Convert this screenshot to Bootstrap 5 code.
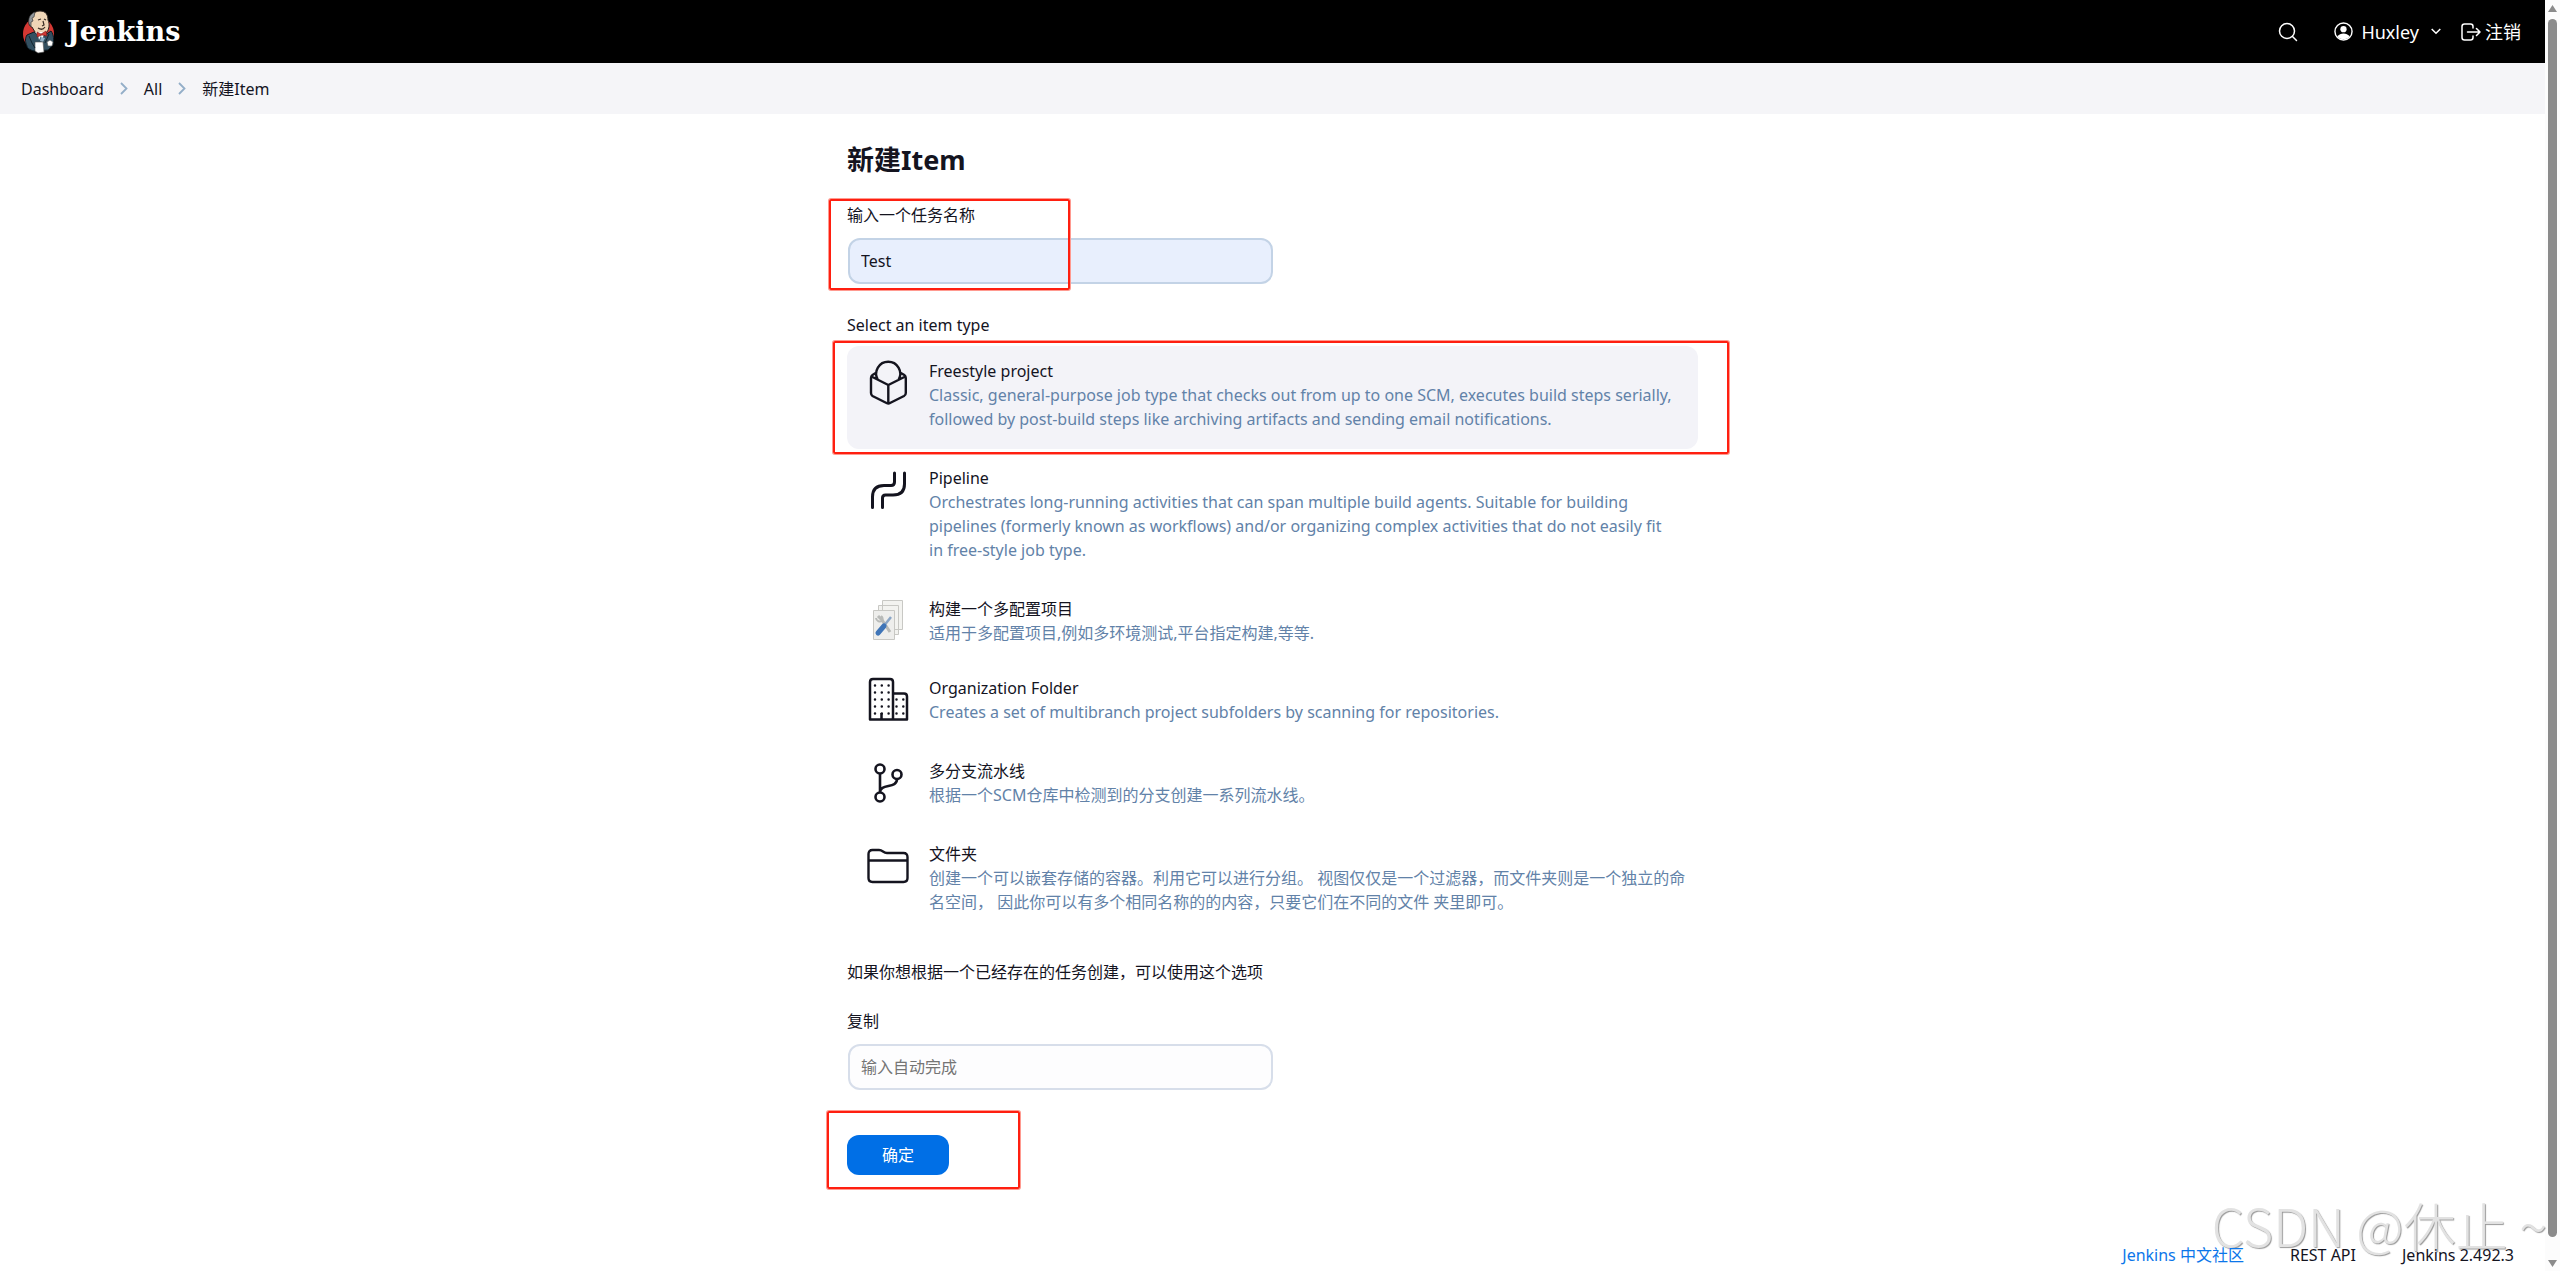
<!DOCTYPE html>
<html lang="zh-CN">
<head>
<meta charset="utf-8">
<meta name="viewport" content="width=device-width, initial-scale=1">
<title>新建Item - Jenkins</title>
<link href="https://cdn.jsdelivr.net/npm/bootstrap@5.3.0/dist/css/bootstrap.min.css" rel="stylesheet">
<style>
body{font-family:"Noto Sans","Noto Sans CJK SC",sans-serif;font-size:16px;line-height:24px;color:#14141f;background:#fff}
a{color:inherit;text-decoration:none}
.top-bar{background:#000;color:#fff;height:63px;padding:0 24px 0 21px;font-size:18px}
.brand-link{gap:10px}
.brand-name{font:bold 27px/32px "DejaVu Serif",serif}
.top-tools{gap:20px}
.crumbs{background:#f5f5f8;height:51px;padding:0 21px;gap:16px}
.form-col{width:100%;max-width:851px}
.page-title{font-size:27px;line-height:36px;font-weight:700;margin:0}
.field-label{display:block;line-height:26px}
.field{width:425px;max-width:100%;height:46px;border:2px solid #c3d3e6;border-radius:12px;padding:0 11px;font-size:16px;background:#e8effd;color:#14141f;margin:10px 0 0 1px}
.field-copy{background:#fdfdfe;border-color:#d7deea}
.field::placeholder{color:#757575}
.kind{border-radius:12px;padding:13px 8px 18px 20px;gap:20px;cursor:pointer}
.kind-on{background:#f3f3f8}
.kind svg{width:42px;height:48px;flex:none}
.kind-desc{color:#6282a8}
.actions{margin-top:45px}
.ok-btn{background:#006fe6;color:#fff;border:0;border-radius:12px;width:102px;height:40px;font-size:16px}
.frame{position:absolute;border:2px solid #ff1f10;border-radius:2px;box-shadow:0 0 0 1px #ff9a90;pointer-events:none}
.frame-name{left:-18px;top:-3px;width:241px;height:91px}
.frame-kind{left:-14px;top:-5px;right:-31px;bottom:-5px}
.frame-ok{left:-20px;top:-24px;width:193px;height:78px}
.foot{gap:46px;padding:0 31px 4px 0;z-index:2}
.foot a:first-child{color:#0b76ea}
.scroll-track{width:15px;background:#fcfcfc;padding:5px 0 4px;gap:6px}
.scroll-thumb{width:9px;border-radius:5px;background:#8b8b8b}
.stamp{position:absolute;right:13px;bottom:16px;z-index:1;font:300 52px/60px "Noto Sans CJK SC",sans-serif;color:#e2e2e2;text-shadow:1px 1px 1px #999;pointer-events:none;white-space:nowrap}
</style>
<script src="https://cdn.jsdelivr.net/npm/bootstrap@5.3.0/dist/js/bootstrap.bundle.min.js"></script>
</head>
<body class="d-flex min-vh-100 position-relative">
<div class="d-flex flex-column flex-grow-1">
  <header class="top-bar d-flex align-items-center justify-content-between">
    <a href="#" class="brand-link d-flex align-items-center">
      <svg width="36" height="46" viewBox="0 0 36 46">
        <ellipse cx="17.500" cy="25" rx="15.500" ry="16.500" fill="#d33833"/>
        <path d="M6 26l7-3 8 5 9-6c3 4 3 9 2 14l-5 5-14 1c-4-1-7-3-7-5-2-4-2-8 0-11z" fill="#335061" stroke="#0b1a22"/>
        <path d="M8 14c0-7 5-12 11-12 6 0 8 4 8 9 2 4 1 9-1 12-3 4-8 4-12 0l-3-5c-2 0-3-2-3-4z" fill="#f0d6b7" stroke="#2b2320"/>
        <path d="M8 15c-1-6 1-10 6-12l-1 5-2 1 1 3-2 1v4z" fill="#92979b" stroke="#3b3b3b" stroke-width=".7"/>
        <path d="M17 11l3-1M23 10l2 1M22 12l1 4-2 1M17 19c3 2 5 2 7-1" fill="none" stroke="#3a2d25" stroke-width="1.200"/>
        <path d="M14 23l3 3 1 5 2-4 1 4 3-8z" fill="#fff"/>
        <path d="M16 23l4 2 5-3 1 5-5-1-5 2z" fill="#d33833" stroke="#7a1b18" stroke-width=".6"/>
        <path d="M20 28l4 1-2 4-3-1z" fill="#8fb0c7"/>
        <path d="M14 33l8 0 1 10-6 1-3-2z" fill="#fff" stroke="#555" stroke-width=".6"/>
        <path d="M26 33l3-2 3 2-1 4-4 0z" fill="#fff" stroke="#555" stroke-width=".6"/>
        <path d="M8 27l3 7 3 5M28 25l-4 9" fill="none" stroke="#13242e"/>
      </svg>
      <span class="brand-name">Jenkins</span>
    </a>
    <nav class="top-tools d-flex align-items-center">
      <a href="#" class="me-3" aria-label="搜索"><svg class="d-block" width="20" height="20" viewBox="0 0 20 20" fill="none" stroke="#fff" stroke-width="1.500" stroke-linecap="round"><circle cx="9" cy="9" r="7.500"/><path d="M14.500 14.500l4 4"/></svg></a>
      <a href="#" class="d-flex align-items-center gap-2">
        <svg width="19" height="19" viewBox="0 0 20 20"><circle cx="10" cy="10" r="9" fill="none" stroke="#fff" stroke-width="1.500"/><circle cx="10" cy="7.500" r="3.300" fill="#fff"/><path d="M3.500 15.500c3-4.500 10-4.500 13 0a9 9 0 0 1-13 0z" fill="#fff"/></svg>
        <span>Huxley</span>
        <svg class="ms-1" width="10" height="7" viewBox="0 0 10 7" fill="none" stroke="#fff" stroke-width="1.500"><path d="M.7 1L5 5.300 9.300 1"/></svg>
      </a>
      <a href="#" class="d-flex align-items-center gap-1">
        <svg width="20" height="18" viewBox="0 0 20 18" fill="none" stroke="#fff" stroke-width="1.500" stroke-linecap="round" stroke-linejoin="round"><path d="M12 5V3.500C12 2 11 1 9.500 1h-6C2 1 1 2 1 3.500v11C1 16 2 17 3.500 17h6c1.500 0 2.500-1 2.500-2.500V13M6.500 9H19M15.500 5.500L19 9l-3.500 3.500"/></svg>
        <span>注销</span>
      </a>
    </nav>
  </header>
  <nav class="crumbs d-flex align-items-center" aria-label="breadcrumb">
    <a href="#">Dashboard</a>
    <svg width="8" height="13" viewBox="0 0 8 13" fill="none" stroke="#93aec8" stroke-width="1.800"><path d="M1 1l5.500 5.500L1 12"/></svg>
    <a href="#">All</a>
    <svg width="8" height="13" viewBox="0 0 8 13" fill="none" stroke="#93aec8" stroke-width="1.800"><path d="M1 1l5.500 5.500L1 12"/></svg>
    <a href="#">新建Item</a>
  </nav>
  <main class="flex-grow-1">
    <form class="form-col mx-auto pt-4">
      <h1 class="page-title mt-1 mb-4">新建Item</h1>
      <div class="position-relative mb-4">
        <label class="field-label" for="job-name">输入一个任务名称</label>
        <input class="field d-block" id="job-name" type="text" value="Test">
        <span class="frame frame-name"></span>
      </div>
      <div class="field-label pt-1 mb-2">Select an item type</div>
      <div class="kind kind-on d-flex mb-1 position-relative">
        <svg viewBox="0 0 42 48" fill="none" stroke="#14141f" stroke-width="2.400" stroke-linejoin="round"><path d="M9.500 13.500L5.500 16Q4 17 4 19v15q0 2 1.500 3l14 7q2 1 3.500 0l14-7q1.800-1 1.800-3V19q0-2-1.500-3L33 13.500M4.500 17.500L21.300 26l17-8.500M21.300 26v18M10.700 20.500a12 12 0 1 1 21 0"/></svg>
        <div><div>Freestyle project</div><div class="kind-desc">Classic, general-purpose job type that checks out from up to one SCM, executes build steps serially, followed by post-build steps like archiving artifacts and sending email notifications.</div></div>
        <span class="frame frame-kind"></span>
      </div>
      <div class="kind d-flex mb-1">
        <svg viewBox="0 0 42 48" fill="none" stroke="#14141f" stroke-width="3" stroke-linecap="round"><path d="M5.500 41.500V31Q5.500 19.500 17 19.500h7q3.500 0 3.500-3.500V7M15.500 41.500V32q0-3 3-3h7.500Q37.500 29 37.500 18V7"/></svg>
        <div><div>Pipeline</div><div class="kind-desc">Orchestrates long-running activities that can span multiple build agents. Suitable for building<br>pipelines (formerly known as workflows) and/or organizing complex activities that do not easily fit<br>in free-style job type.</div></div>
      </div>
      <div class="kind d-flex">
        <svg viewBox="0 0 42 48" stroke="#c8c8c4"><path d="M15.500 3.500h20v29h-20zM11.500 8.500h20v29h-20z" fill="#f3f3f0"/><path d="M6.500 13.500h21v29h-21z" fill="#eeeeec"/><path d="M11 19l4 4 8 12" fill="none" stroke="#b8bab8" stroke-width="3"/><path d="M9 21a4 4 0 0 0 6 3 4 4 0 0 0-1-5" fill="none" stroke="#b8bab8" stroke-width="2"/><path d="M24 20l-8 10" stroke="#8aa5c5" stroke-width="2.500"/><path d="M17 29l-6 7" stroke="#3f75b8" stroke-width="5" stroke-linecap="round"/></svg>
        <div><div>构建一个多配置项目</div><div class="kind-desc">适用于多配置项目,例如多环境测试,平台指定构建,等等.</div></div>
      </div>
      <div class="kind d-flex mb-1">
        <svg viewBox="0 0 42 48" fill="none" stroke="#14141f" stroke-width="2.500" stroke-linejoin="round"><path d="M3 43.500V6q0-3 3-3h17q3 0 3 3v37.500zM26 17.500h11q3 0 3 3v23H26M14.500 43v-6"/><path d="M8 9.500h16M8 16.500h16M8 23.500h16M8 30.500h16M8 37.500h16M29.500 23.500h7M29.500 30.500h7M29.500 37.500h7" stroke-linecap="round" stroke-dasharray="0 6.800"/></svg>
        <div><div>Organization Folder</div><div class="kind-desc">Creates a set of multibranch project subfolders by scanning for repositories.</div></div>
      </div>
      <div class="kind d-flex mb-1">
        <svg viewBox="0 0 42 48" fill="none" stroke="#14141f" stroke-width="2.600"><circle cx="13" cy="10" r="4.500"/><circle cx="13" cy="38" r="4.500"/><circle cx="30" cy="15.500" r="4.500"/><path d="M13 14.500v19M30 20c0 10-17 4-17 13.500"/></svg>
        <div><div>多分支流水线</div><div class="kind-desc">根据一个SCM仓库中检测到的分支创建一系列流水线。</div></div>
      </div>
      <div class="kind d-flex mb-4">
        <svg viewBox="0 0 42 48" fill="none" stroke="#14141f" stroke-width="2.400" stroke-linejoin="round"><path d="M1.500 18v18q0 4 4 4h31q4 0 4-4V15q0-4-4-4H20q-2 0-4-1.500T12 8H5.500q-4 0-4 4v7M1.500 18.500h39"/></svg>
        <div><div>文件夹</div><div class="kind-desc">创建一个可以嵌套存储的容器。利用它可以进行分组。 视图仅仅是一个过滤器，而文件夹则是一个独立的命<br>名空间， 因此你可以有多个相同名称的的内容，只要它们在不同的文件 夹里即可。</div></div>
      </div>
      <p class="pt-1 mb-4">如果你想根据一个已经存在的任务创建，可以使用这个选项</p>
      <label class="field-label" for="copy-from">复制</label>
      <input class="field field-copy d-block" id="copy-from" type="text" placeholder="输入自动完成">
      <div class="actions position-relative"><button class="ok-btn" type="button">确定</button><span class="frame frame-ok"></span></div>
    </form>
  </main>
  <footer class="foot d-flex justify-content-end position-relative">
    <a href="#">Jenkins 中文社区</a><a href="#">REST API</a><a href="#">Jenkins 2.492.3</a>
  </footer>
</div>
<div class="scroll-track d-flex flex-column align-items-center flex-shrink-0" aria-hidden="true">
  <svg width="9" height="8" viewBox="0 0 9 8"><path d="M4.500 0L9 7H0z" fill="#8b8b8b"/></svg>
  <div class="scroll-thumb flex-grow-1"></div>
  <svg class="mt-3" width="9" height="8" viewBox="0 0 9 8"><path d="M4.500 8L9 1H0z" fill="#8b8b8b"/></svg>
</div>
<div class="stamp">CSDN @休止 ~</div>
</body>
</html>
